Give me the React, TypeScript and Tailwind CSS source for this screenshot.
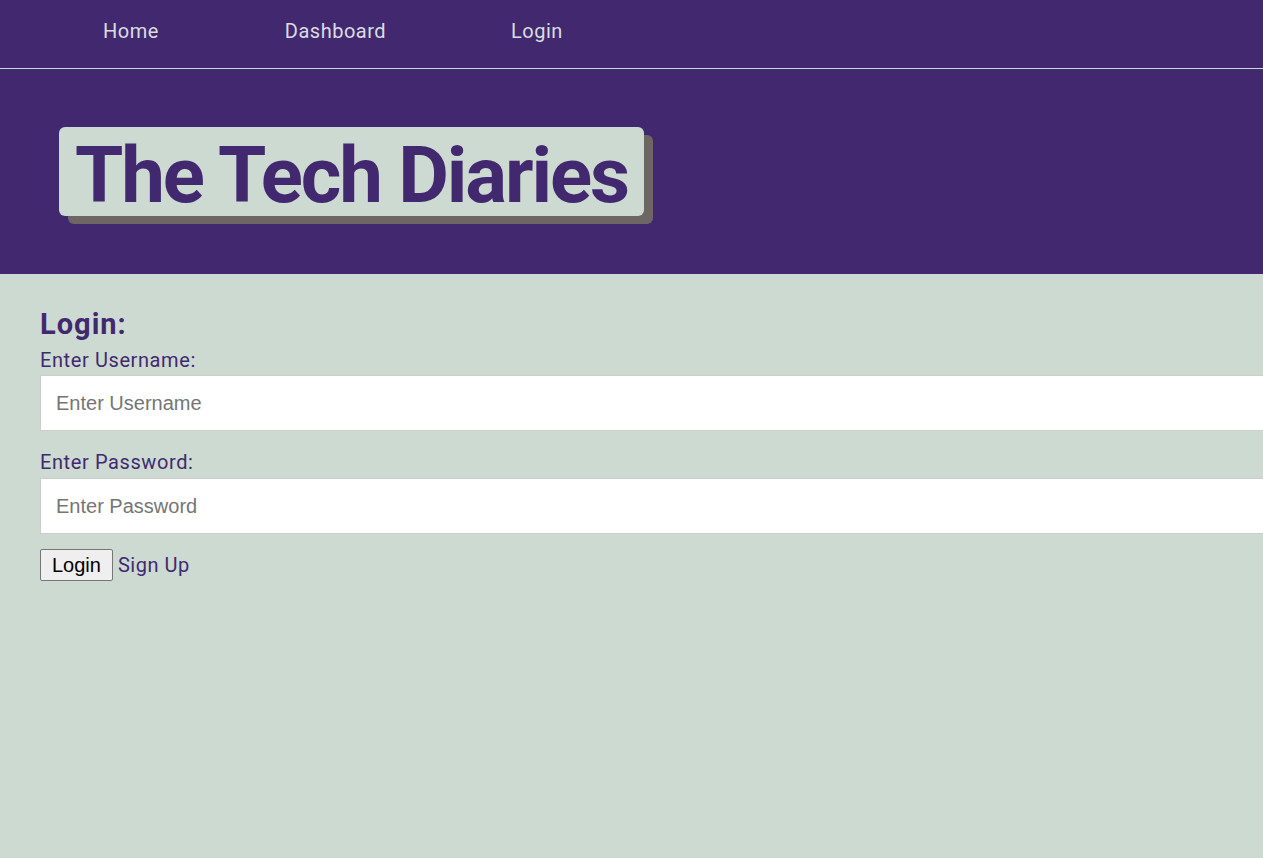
export default function App() {
  const font = { fontFamily: "Roboto, 'Noto Sans', sans-serif" };
  const arial = { fontFamily: "'Liberation Sans', Arial, sans-serif" };
  return (
    <div className="min-h-[858px] w-full overflow-hidden bg-[#cddad1]" style={font}>
      <nav className="h-[69px] bg-[#42296f] border-b border-[#cddad1] flex items-center pl-[103px] text-[20px] tracking-[0.5px] text-[#d9dde0]">
        <a className="block pb-[6px]">Home</a>
        <a className="block pb-[6px] ml-[126px]">Dashboard</a>
        <a className="block pb-[6px] ml-[125px]">Login</a>
      </nav>
      <header className="h-[205px] bg-[#42296f] pt-[58px] pl-[59px]">
        <div className="inline-block rounded-[6px] bg-[#cddad1] px-[16px] h-[89px] shadow-[9px_8px_0_#6d6665]">
          <h1 className="text-[78px] font-bold text-[#42296f] leading-[89px] tracking-[-2.1px] pt-[4px] h-[89px]">The Tech Diaries</h1>
        </div>
      </header>
      <main className="pl-[40px] pt-[33px]">
        <h2 className="text-[29px] font-bold text-[#42296f] leading-[34px] tracking-[1px]">Login:</h2>
        <label className="block text-[20px] text-[#42296f] leading-[30px] mt-[4px] tracking-[0.6px]">Enter Username:</label>
        <input
          placeholder="Enter Username"
          className="block w-[1300px] h-[56px] bg-white border border-[#cccccc] px-[15px] text-[20px] placeholder:text-[#757575] outline-none"
          style={arial}
        />
        <label className="block text-[20px] text-[#42296f] leading-[32px] mt-[15px] tracking-[0.6px]">Enter Password:</label>
        <input
          type="password"
          placeholder="Enter Password"
          className="block w-[1300px] h-[56px] bg-white border border-[#cccccc] px-[15px] text-[20px] placeholder:text-[#757575] outline-none"
          style={arial}
        />
        <div className="mt-[15px] flex items-center">
          <button
            className="h-[32px] px-[11px] bg-[#efefef] border border-[#767676] rounded-[2px] text-[20px] text-black leading-none"
            style={arial}
          >
            Login
          </button>
          <a className="ml-[5px] text-[20px] text-[#42296f] tracking-[0.5px]">Sign Up</a>
        </div>
      </main>
    </div>
  );
}
